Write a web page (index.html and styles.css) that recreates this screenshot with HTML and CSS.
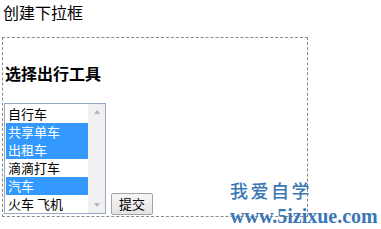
FILE: index.html
```html
<!DOCTYPE html>
<html lang="zh">
<head>
<meta charset="utf-8">
<link rel="stylesheet" href="styles.css">
</head>
<body>
<div class="title">创建下拉框</div>
<form class="box">
  <h4 class="heading">选择出行工具</h4>
  <div class="row">
    <div class="select" role="listbox" aria-multiselectable="true">
      <div class="options">
        <div class="opt">自行车</div>
        <div class="opt sel">共享单车</div>
        <div class="opt sel">出租车</div>
        <div class="opt">滴滴打车</div>
        <div class="opt sel">汽车</div>
        <div class="opt">火车 飞机</div>
      </div>
      <div class="scroll">
        <span class="arrow up"></span>
        <span class="arrow down"></span>
      </div>
    </div>
    <button type="button" class="btn">提交</button>
  </div>
</form>
<div class="mark">
  <div class="mark-cn">我爱自学</div>
  <div class="mark-en">www.5izixue.com</div>
</div>
</body>
</html>
```

FILE: styles.css
```css
html, body {
  margin: 0;
  padding: 0;
  background: #fff;
}
body {
  position: relative;
  width: 381px;
  height: 229px;
  overflow: hidden;
  font-family: "Noto Sans CJK SC", "Noto Sans", sans-serif;
  color: #000;
}
.title {
  font-size: 16px;
  line-height: 20px;
  padding: 2px 0 0 3px;
  height: 37px;
  box-sizing: border-box;
}
.box {
  margin: 0 0 0 2px;
  width: 306px;
  height: 180px;
  box-sizing: border-box;
  border: 1px dashed #8a8a8a;
  padding: 0 1px 0 0;
}
.heading {
  margin: 25px 0 0 2px;
  font-size: 16px;
  line-height: 20px;
  font-weight: bold;
}
.row {
  margin-top: 20px;
  display: flex;
  align-items: flex-end;
  gap: 5px;
  padding-left: 1px;
}
.select {
  width: 102px;
  height: 111px;
  box-sizing: border-box;
  border: 1px solid #96a8c8;
  display: flex;
  background: #fff;
}
.options {
  flex: 1;
  padding: 1px 0 0 1px;
}
.opt {
  height: 18px;
  line-height: 18px;
  font-size: 13px;
  padding-left: 2px;
  white-space: nowrap;
  color: #000;
}
.opt.sel {
  background: #3399ff;
  color: #fff;
}
.scroll {
  width: 17px;
  background: #f0f0f0;
  display: flex;
  flex-direction: column;
  justify-content: space-between;
  align-items: center;
  padding: 6px 0;
}
.arrow {
  width: 0;
  height: 0;
  border-left: 3.5px solid transparent;
  border-right: 3.5px solid transparent;
}
.arrow.up {
  border-bottom: 4px solid #b5b5b5;
}
.arrow.down {
  border-top: 4px solid #b5b5b5;
}
.btn {
  width: 42px;
  height: 22px;
  margin: 0 0 -1px 0;
  padding: 0;
  font-family: "Noto Sans CJK SC", sans-serif;
  font-size: 13px;
  line-height: 18px;
  color: #000;
  background: linear-gradient(#f6f6f6, #e4e4e4);
  border: 1px solid #a3a3a3;
  border-radius: 2px;
}
.mark {
  position: absolute;
  left: 230px;
  top: 177px;
  color: #3a77b4;
}
.mark-cn {
  font-family: "Noto Sans CJK SC", sans-serif;
  font-weight: 500;
  font-size: 18px;
  line-height: 26px;
  letter-spacing: 2.5px;
}
.mark-en {
  font-family: "Liberation Serif", serif;
  font-weight: bold;
  font-size: 20px;
  line-height: 22px;
  margin-top: 2px;
}
```
